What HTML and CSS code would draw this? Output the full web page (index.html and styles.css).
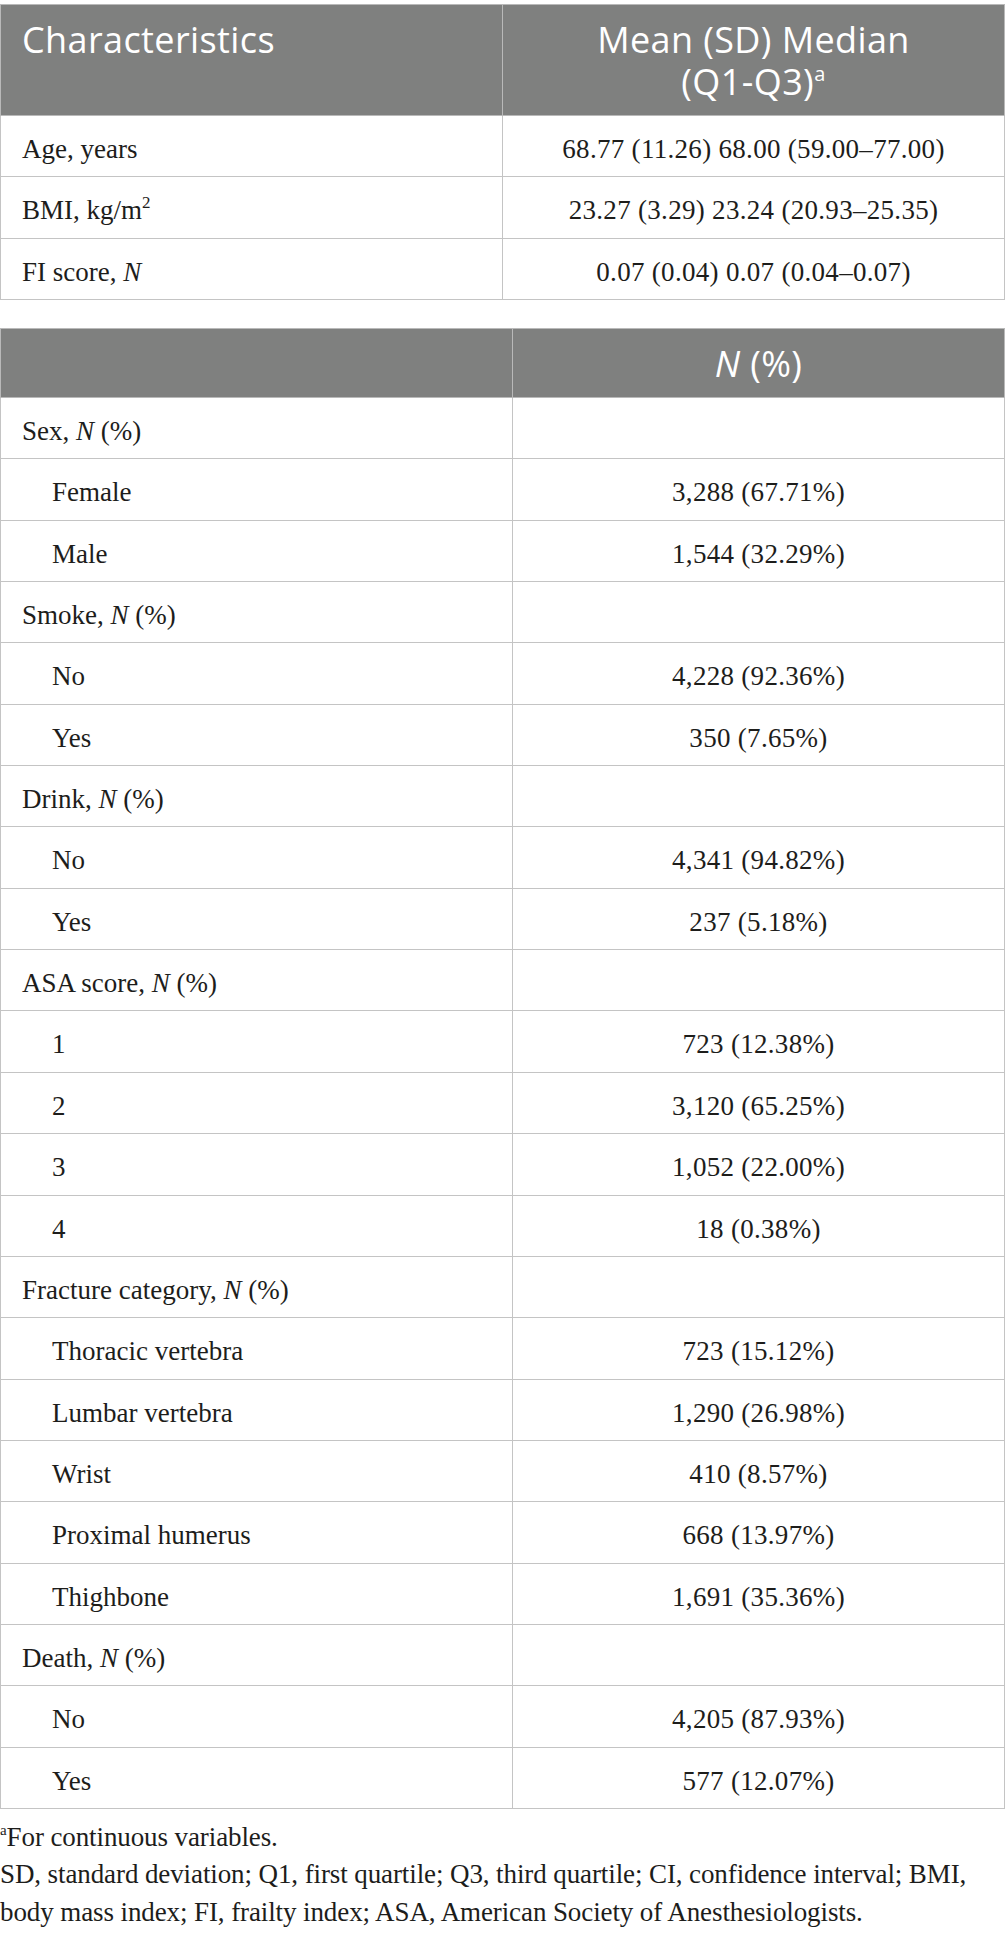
FILE: index.html
```html
<!DOCTYPE html>
<html lang="en">
<head>
<meta charset="utf-8">
<title>Table</title>
<link rel="stylesheet" href="styles.css">
</head>
<body>
<div class="page">
  <table class="data t1">
    <thead>
      <tr><th class="c1">Characteristics</th><th class="c2">Mean (SD) Median<br>(Q1-Q3)<sup>a</sup></th></tr>
    </thead>
    <tbody>
      <tr><td>Age, years</td><td class="v">68.77 (11.26) 68.00 (59.00–77.00)</td></tr>
      <tr><td>BMI, kg/m<sup class="sq">2</sup></td><td class="v">23.27 (3.29) 23.24 (20.93–25.35)</td></tr>
      <tr><td>FI score, <i>N</i></td><td class="v">0.07 (0.04) 0.07 (0.04–0.07)</td></tr>
    </tbody>
  </table>

  <table class="data t2">
    <thead>
      <tr><th class="c1"></th><th class="c2"><i>N</i> (%)</th></tr>
    </thead>
    <tbody>
      <tr><td>Sex, <i>N</i> (%)</td><td class="v"></td></tr>
      <tr><td class="ind">Female</td><td class="v">3,288 (67.71%)</td></tr>
      <tr><td class="ind">Male</td><td class="v">1,544 (32.29%)</td></tr>
      <tr><td>Smoke, <i>N</i> (%)</td><td class="v"></td></tr>
      <tr><td class="ind">No</td><td class="v">4,228 (92.36%)</td></tr>
      <tr><td class="ind">Yes</td><td class="v">350 (7.65%)</td></tr>
      <tr><td>Drink, <i>N</i> (%)</td><td class="v"></td></tr>
      <tr><td class="ind">No</td><td class="v">4,341 (94.82%)</td></tr>
      <tr><td class="ind">Yes</td><td class="v">237 (5.18%)</td></tr>
      <tr><td>ASA score, <i>N</i> (%)</td><td class="v"></td></tr>
      <tr><td class="ind">1</td><td class="v">723 (12.38%)</td></tr>
      <tr><td class="ind">2</td><td class="v">3,120 (65.25%)</td></tr>
      <tr><td class="ind">3</td><td class="v">1,052 (22.00%)</td></tr>
      <tr><td class="ind">4</td><td class="v">18 (0.38%)</td></tr>
      <tr><td>Fracture category, <i>N</i> (%)</td><td class="v"></td></tr>
      <tr><td class="ind">Thoracic vertebra</td><td class="v">723 (15.12%)</td></tr>
      <tr><td class="ind">Lumbar vertebra</td><td class="v">1,290 (26.98%)</td></tr>
      <tr><td class="ind">Wrist</td><td class="v">410 (8.57%)</td></tr>
      <tr><td class="ind">Proximal humerus</td><td class="v">668 (13.97%)</td></tr>
      <tr><td class="ind">Thighbone</td><td class="v">1,691 (35.36%)</td></tr>
      <tr><td>Death, <i>N</i> (%)</td><td class="v"></td></tr>
      <tr><td class="ind">No</td><td class="v">4,205 (87.93%)</td></tr>
      <tr><td class="ind">Yes</td><td class="v">577 (12.07%)</td></tr>
    </tbody>
  </table>

  <div class="notes">
    <p><sup class="fn">a</sup>For continuous variables.</p>
    <p>SD, standard deviation; Q1, first quartile; Q3, third quartile; CI, confidence interval; BMI, body mass index; FI, frailty index; ASA, American Society of Anesthesiologists.</p>
  </div>
</div>
</body>
</html>
```
FILE: styles.css
```css
html, body {
  margin: 0;
  padding: 0;
  background: #ffffff;
}

.page {
  padding-top: 4px;
  width: 1005px;
  font-family: "Liberation Serif", "Times New Roman", serif;
  font-size: 27px;
  color: #1d1d1b;
}

.data {
  width: 1005px;
  border-collapse: collapse;
  table-layout: fixed;
}

.data th,
.data td {
  box-sizing: border-box;
}

.t1 .c1 { width: 502px; }
.t2 .c1 { width: 512px; }

.data th {
  background: #7f807f;
  color: #ffffff;
  font-family: "Open Sans", "Liberation Sans", sans-serif;
  font-weight: 400;
  font-size: 36px;
  letter-spacing: 0.4px;
  line-height: 42px;
  padding: 14px 10px 12px 21px;
  vertical-align: top;
  border: 1px solid #b9b9b9;
}

.data th.c1 { text-align: left; }
.data th.c2 { text-align: center; padding-left: 10px; }

.data th sup {
  font-size: 20px;
  vertical-align: 14px;
  line-height: 0;
}

.data td {
  border: 1px solid #c4c4c4;
  line-height: 34.35px;
  padding: 16px 10px 10px 21px;
  vertical-align: top;
  text-align: left;
}

.data td.ind { padding-left: 51px; }
.data td.v {
  text-align: center;
  padding-left: 10px;
  letter-spacing: 0.3px;
}

.sq {
  font-size: 17px;
  vertical-align: 11px;
  line-height: 0;
}

.t2 { margin-top: 28px; }

.notes {
  margin-top: 10px;
  line-height: 37.5px;
  letter-spacing: -0.1px;
}

.notes p { margin: 0; }

.fn {
  font-size: 15px;
  vertical-align: 11px;
  line-height: 0;
}
```
